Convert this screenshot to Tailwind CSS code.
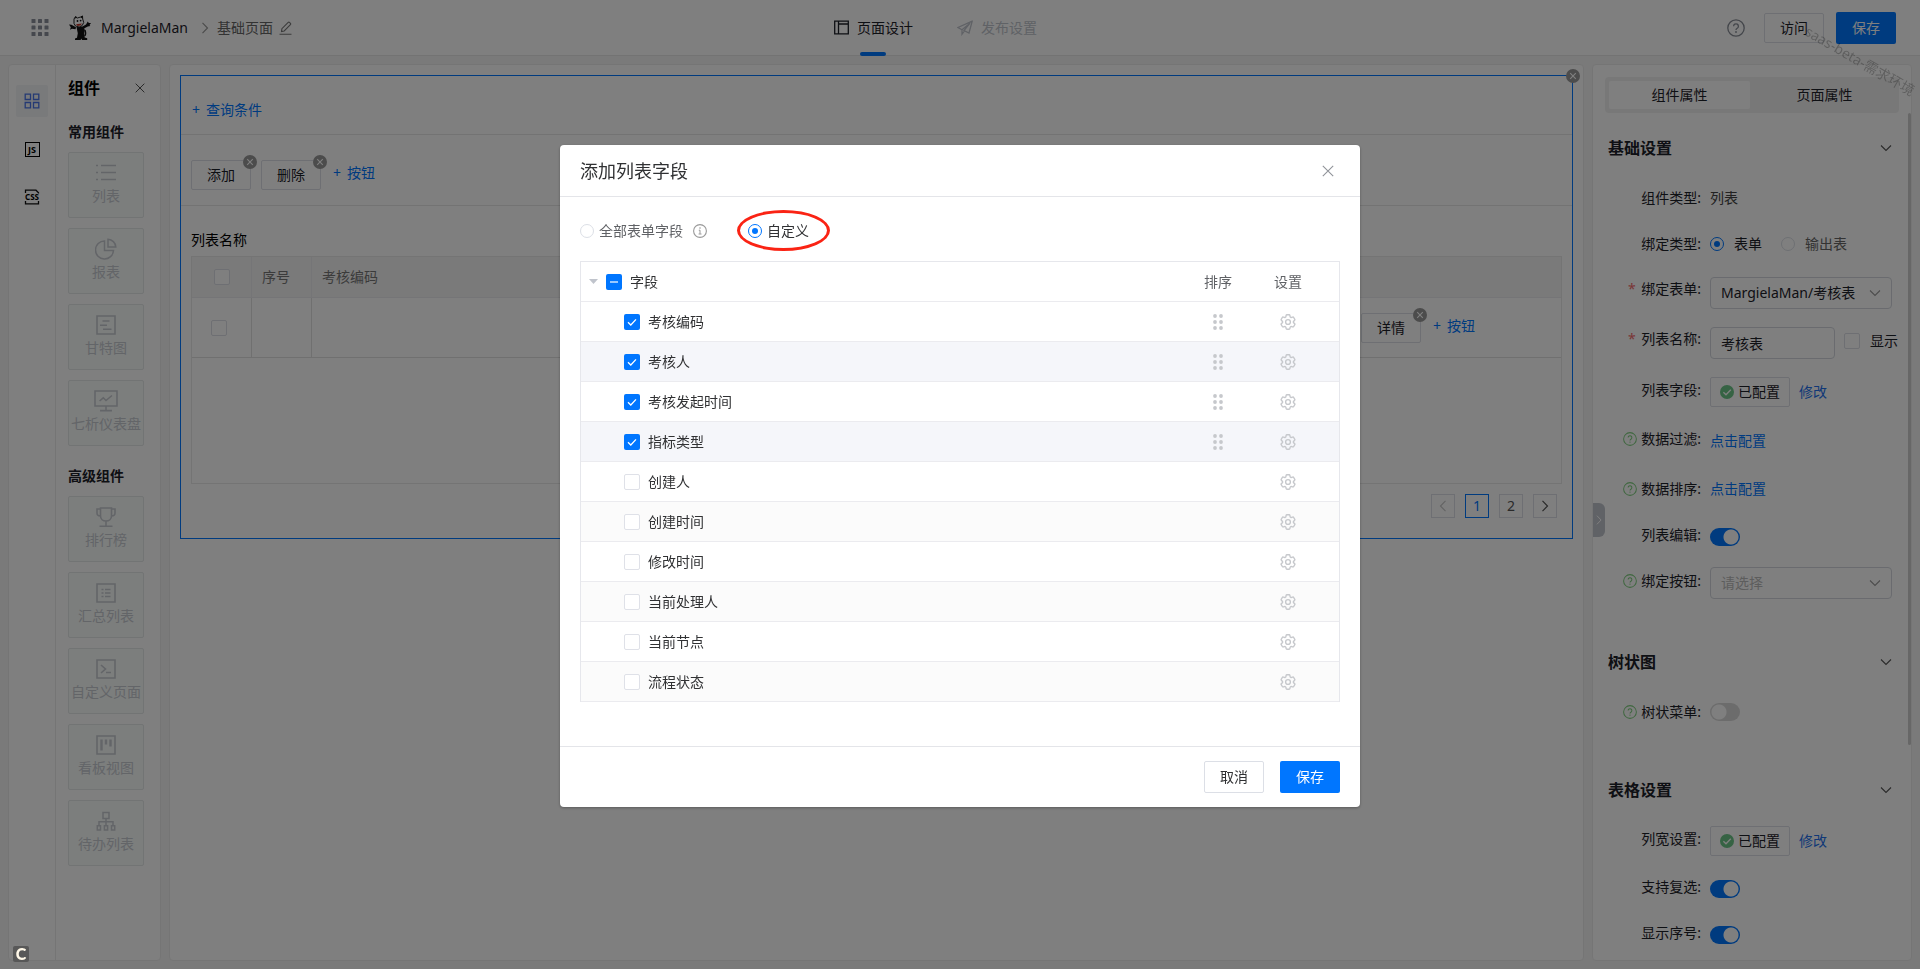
<!DOCTYPE html>
<html lang="zh-CN">
<head>
<meta charset="utf-8">
<title>MargielaMan - 页面设计</title>
<script src="https://cdn.jsdelivr.net/npm/@tailwindcss/browser@4"></script>
</head>
<body class="font-['Noto_Sans','Noto_Sans_CJK_SC',sans-serif] text-sm leading-5 text-[#1d2129]">

<!-- Icon library -->
<svg class="hidden" aria-hidden="true">
  <symbol id="chev-down" viewBox="0 0 12 12"><path d="M1 3.5l5 5 5-5" fill="none" stroke="currentColor" stroke-width="1.1"/></symbol>
  <symbol id="chev-right" viewBox="0 0 12 12"><path d="M3.5 .8l5 5.2-5 5.2" fill="none" stroke="currentColor" stroke-width="1.2"/></symbol>
  <symbol id="close" viewBox="0 0 12 12"><path d="M.8.8l10.4 10.4M11.2.8L.8 11.2" fill="none" stroke="currentColor" stroke-width="1.1"/></symbol>
  <symbol id="badge-x" viewBox="0 0 14 14"><circle cx="7" cy="7" r="7" fill="#999"/><path d="M4.2 4.2l5.6 5.6M9.8 4.2L4.2 9.8" stroke="#fff" stroke-width="1.1"/></symbol>
  <symbol id="help" viewBox="0 0 18 18"><circle cx="9" cy="9" r="8.2" fill="none" stroke="currentColor" stroke-width="1.3"/><path d="M6.600 7.200a2.400 2.400 0 1 1 3.600 2.100c-.8.45-1.200.8-1.200 1.700" fill="none" stroke="currentColor" stroke-width="1.3"/><circle cx="9" cy="13" r=".9" fill="currentColor"/></symbol>
  <symbol id="done" viewBox="0 0 14 14"><circle cx="7" cy="7" r="7" fill="#6cc788"/><path d="M3.4 7.2l2.6 2.6 4.8-5" fill="none" stroke="#fff" stroke-width="1.3"/></symbol>
  <symbol id="tick" viewBox="0 0 16 16"><path d="M4 8.2l2.8 2.8L12 5.4" fill="none" stroke="#fff" stroke-width="1.3"/></symbol>
  <symbol id="drag" viewBox="0 0 10 16"><g fill="#c6c8cc"><circle cx="2" cy="2" r="1.9"/><circle cx="8" cy="2" r="1.9"/><circle cx="2" cy="8" r="1.9"/><circle cx="8" cy="8" r="1.9"/><circle cx="2" cy="14" r="1.9"/><circle cx="8" cy="14" r="1.9"/></g></symbol>
  <symbol id="gear" viewBox="2 2 20 20"><g fill="none" stroke="#c6c8cc" stroke-width="1.7"><path d="M9.594 3.94c.09-.542.56-.94 1.11-.94h2.593c.55 0 1.02.398 1.11.94l.213 1.281c.063.374.313.686.645.87.074.04.147.083.22.127.325.196.72.257 1.075.124l1.217-.456a1.125 1.125 0 0 1 1.37.49l1.296 2.247a1.125 1.125 0 0 1-.26 1.431l-1.003.827c-.293.241-.438.613-.43.992a7.723 7.723 0 0 1 0 .255c-.008.378.137.75.43.991l1.004.827c.424.35.534.955.26 1.43l-1.298 2.247a1.125 1.125 0 0 1-1.369.491l-1.217-.456c-.355-.133-.75-.072-1.076.124a6.47 6.47 0 0 1-.22.128c-.331.183-.581.495-.644.869l-.213 1.281c-.09.543-.56.94-1.11.94h-2.594c-.55 0-1.019-.398-1.11-.94l-.213-1.281c-.062-.374-.312-.686-.644-.87a6.52 6.52 0 0 1-.22-.127c-.325-.196-.72-.257-1.076-.124l-1.217.456a1.125 1.125 0 0 1-1.369-.49l-1.297-2.247a1.125 1.125 0 0 1 .26-1.431l1.004-.827c.292-.24.437-.613.43-.991a6.932 6.932 0 0 1 0-.255c.007-.38-.138-.751-.43-.992l-1.004-.827a1.125 1.125 0 0 1-.26-1.43l1.297-2.247a1.125 1.125 0 0 1 1.37-.491l1.216.456c.356.133.751.072 1.076-.124.072-.044.146-.086.22-.128.332-.183.582-.495.644-.869l.214-1.28Z"/><circle cx="12" cy="12" r="3"/></g></symbol>
</svg>

<div class="flex h-screen flex-col bg-[#f5f5f5]">

  <!-- Top bar -->
  <header class="flex h-14 shrink-0 items-stretch border-b border-[#e6e6e6] bg-white">
    <div class="flex flex-1 items-center pl-[31px]">
      <button aria-label="应用" class="text-[#8c919c]">
        <svg class="size-[18px]" viewBox="0 0 18 18" fill="currentColor"><rect x=".5" y="0" width="4" height="4" rx=".6"/><rect x="7" y="0" width="4" height="4" rx=".6"/><rect x="13.500" y="0" width="4" height="4" rx=".6"/><rect x=".5" y="6.500" width="4" height="4" rx=".6"/><rect x="7" y="6.500" width="4" height="4" rx=".6"/><rect x="13.500" y="6.500" width="4" height="4" rx=".6"/><rect x=".5" y="13" width="4" height="4" rx=".6"/><rect x="7" y="13" width="4" height="4" rx=".6"/><rect x="13.500" y="13" width="4" height="4" rx=".6"/></svg>
      </button>
      <svg class="ml-[19px] h-[26px] w-6" viewBox="0 0 24 26" aria-label="MargielaMan"><path d="M8.500 12l7-.8 1.400 4-.6 3 .4 4.300 2.500.8v1.700H14l-.6-1.500-.8 1.500H7v-1.500l2-.8.800-4.500zM1 9.500l2.500.3 4.500 2.500-.5 2-3.500-.6-2 1 .8-2.400zM14.500 11.500l3.500-2 1.800-3 1 1.500 2.200 0-1.500 2 .8 1-2.500.4-3.800 2z" fill="#111"/><path d="M6 4l1.500-2.500L9.500 3l3-1 2-1 .2 3 1 3.500-1.500 3-3 1.500-3.700-1L6 8.500z" fill="#fff" stroke="#222" stroke-width="1"/><path d="M6.500 3.500l1.200-2L9.200 3zM12.500 2.500l2-2 .2 3z" fill="#111"/><circle cx="9.500" cy="6" r=".9" fill="#111"/><circle cx="12.600" cy="5.600" r=".9" fill="#111"/><path d="M8 9.300l6-.8-1.500 2-3 .4z" fill="#c0392b"/><path d="M16.500 21c2-1.500 1.200-4 .5-6" stroke="#111" stroke-width="1.300" fill="none"/></svg>
      <span class="ml-[9px]">MargielaMan</span>
      <svg class="ml-[11px] size-3 text-[#999]"><use href="#chev-right"/></svg>
      <span class="ml-1.5 text-[#666]">基础页面</span>
      <button aria-label="重命名" class="ml-1.5 text-[#777]"><svg class="size-3.5" viewBox="0 0 14 14" fill="none" stroke="currentColor" stroke-width="1.100"><path d="M.5 13.300h12M2.500 10.500l.4-2.800 6.300-6.300c.4-.4.900-.4 1.300 0l.9.900c.4.400.4.900 0 1.300L5.200 10z"/></svg></button>
    </div>
    <nav class="flex items-stretch gap-11 pr-14">
      <a href="#" class="relative flex items-center gap-2">
        <svg class="size-[15px]" viewBox="0 0 15 15" fill="none" stroke="currentColor" stroke-width="1.300"><path d="M.7 1.200h13.600v12.600H.7zM4.500 1.200v12.600M4.500 4h9.800"/></svg>
        页面设计
        <span class="absolute bottom-[-1px] left-[26px] h-1 w-[26px] rounded-full bg-[#0076ff]"></span>
      </a>
      <a href="#" class="flex items-center gap-2 text-[#c0c4cc]">
        <svg class="size-4" viewBox="0 0 16 16" fill="none" stroke="currentColor" stroke-width="1.300"><path d="M15.200 1.200L1 7.500l4 2.200 8-6.500-6 7.300 5 2.500zM5 9.700v4.500l2.300-3"/></svg>
        发布设置
      </a>
    </nav>
    <div class="flex flex-1 items-center justify-end pr-6">
      <button aria-label="帮助" class="text-[#888d96]"><svg class="size-[18px]"><use href="#help"/></svg></button>
      <button class="ml-[19px] h-[30px] w-[60px] rounded-xs border border-[#dcdfe6] bg-white">访问</button>
      <button class="ml-3 h-8 w-[60px] rounded-xs bg-[#0076ff] text-white">保存</button>
    </div>
  </header>

  <div class="flex min-h-0 flex-1 gap-2 px-2 pt-2 pb-2">

    <!-- Component palette -->
    <aside class="flex w-[153px] shrink-0 rounded border border-[#ebebeb] bg-white">
      <div class="flex w-[47px] shrink-0 flex-col items-center gap-4 border-r border-[#ebebeb] pt-5">
        <button aria-label="组件" class="grid size-8 place-items-center rounded-xs bg-[#f3f4f6] text-[#4a74e8]"><svg class="size-4" viewBox="0 0 16 16" fill="none" stroke="currentColor" stroke-width="1.300"><path d="M1.200 1.200h5.300v5.300H1.200zM9.500 1.200h5.300v5.300H9.500zM1.200 9.500h5.300v5.300H1.200zM9.500 9.500h5.300v5.300H9.500z"/></svg></button>
        <button aria-label="JS" class="grid size-8 place-items-center"><span class="grid size-[15px] place-items-center border border-black text-[9px] leading-none font-bold text-black">JS</span></button>
        <button aria-label="CSS" class="grid size-8 place-items-center"><span class="relative grid size-4 place-items-center text-[8px] leading-none font-bold text-black"><svg class="absolute inset-0 size-4" viewBox="0 0 16 16" fill="none" stroke="#111" stroke-width="1.300"><path d="M1.500 4V1.200H12l2.500 2.500v.8M1.500 12v2.800h13V12"/></svg>CSS</span></button>
      </div>
      <div class="min-w-0 flex-1 pl-3">
        <div class="flex h-[46px] items-center justify-between pr-[15px]">
          <h2 class="text-base font-bold text-black">组件</h2>
          <button aria-label="关闭" class="text-[#444]"><svg class="size-2.5"><use href="#close"/></svg></button>
        </div>
        <h3 class="flex h-[41px] items-center font-bold">常用组件</h3>
        <div class="flex flex-col gap-2.5 text-[#c6cad1]">
          <button class="flex h-[66px] w-[76px] flex-col items-center gap-0.5 rounded-xs border border-[#e4e8e8] bg-[#f9fcfa] pt-[9px] whitespace-nowrap"><svg class="size-[22px]" viewBox="0 0 22 22" stroke="currentColor" stroke-width="1.500"><path d="M1 3.500h2M6 3.500h15M1 10.500h2M6 10.500h15M1 17.500h2M6 17.500h15"/></svg>列表</button>
          <button class="flex h-[66px] w-[76px] flex-col items-center gap-0.5 rounded-xs border border-[#e4e8e8] bg-[#f9fcfa] pt-[9px] whitespace-nowrap"><svg class="size-[22px]" viewBox="0 0 22 22" fill="none" stroke="currentColor" stroke-width="1.500"><path d="M9.500 3a9 9 0 1 0 9 9.500h-9zM13 1.200a8.300 8.300 0 0 1 7.800 7.800H13z"/></svg>报表</button>
          <button class="flex h-[66px] w-[76px] flex-col items-center gap-0.5 rounded-xs border border-[#e4e8e8] bg-[#f9fcfa] pt-[9px] whitespace-nowrap"><svg class="size-[22px]" viewBox="0 0 22 22" fill="none" stroke="currentColor" stroke-width="1.600"><path d="M2 2h18v18H2zM7.500 7h7M5 11.200h7M8 15.300h8.500"/></svg>甘特图</button>
          <button class="flex h-[66px] w-[76px] flex-col items-center gap-0.5 rounded-xs border border-[#e4e8e8] bg-[#f9fcfa] pt-[9px] whitespace-nowrap"><svg class="h-[22px] w-[26px]" viewBox="0 0 26 24" fill="none" stroke="currentColor" stroke-width="1.700"><path d="M1 1h24v16.500H1zM13 17.500v4.500M6.500 22.500h13M6 12l4-3.500 3 3 6.500-5.500"/></svg>七析仪表盘</button>
        </div>
        <h3 class="flex h-[50px] items-center pt-2.5 font-bold">高级组件</h3>
        <div class="flex flex-col gap-2.5 text-[#c6cad1]">
          <button class="flex h-[66px] w-[76px] flex-col items-center gap-0.5 rounded-xs border border-[#e4e8e8] bg-[#f9fcfa] pt-[9px] whitespace-nowrap"><svg class="size-[22px]" viewBox="0 0 22 22" fill="none" stroke="currentColor" stroke-width="1.600"><path d="M5.500 2h11v8c0 3-2.500 5-5.500 5s-5.500-2-5.500-5zM11 15v5M4.500 20.200h13M5.500 3H2v4c0 2 1.500 3 3.500 3M16.500 3H20v4c0 2-1.500 3-3.500 3"/></svg>排行榜</button>
          <button class="flex h-[66px] w-[76px] flex-col items-center gap-0.5 rounded-xs border border-[#e4e8e8] bg-[#f9fcfa] pt-[9px] whitespace-nowrap"><svg class="size-[22px]" viewBox="0 0 22 22" fill="none" stroke="currentColor" stroke-width="1.600"><path d="M2 2h18v18H2zM6.500 7.500h2M10 7.500h5.500M6.500 11h2M10 11h5.500M6.500 14.500h2M10 14.500h5.500"/></svg>汇总列表</button>
          <button class="flex h-[66px] w-[76px] flex-col items-center gap-0.5 rounded-xs border border-[#e4e8e8] bg-[#f9fcfa] pt-[9px] whitespace-nowrap"><svg class="size-[22px]" viewBox="0 0 22 22" fill="none" stroke="currentColor" stroke-width="1.600"><path d="M2 2h18v18H2zM6 7l4.500 4L6 15M11 14.500h5"/></svg>自定义页面</button>
          <button class="flex h-[66px] w-[76px] flex-col items-center gap-0.5 rounded-xs border border-[#e4e8e8] bg-[#f9fcfa] pt-[9px] whitespace-nowrap"><svg class="size-[22px]" viewBox="0 0 22 22" fill="none" stroke="currentColor" stroke-width="1.600"><path d="M2 2h18v18H2z"/><path stroke-width="2.400" d="M6.500 5.500v11M11 5.500v5M15.500 5.500v7"/></svg>看板视图</button>
          <button class="flex h-[66px] w-[76px] flex-col items-center gap-0.5 rounded-xs border border-[#e4e8e8] bg-[#f9fcfa] pt-[9px] whitespace-nowrap"><svg class="size-[22px]" viewBox="0 0 22 22" fill="none" stroke="currentColor" stroke-width="1.500"><path d="M8 2.500h6v6H8zM11 8.500v7M4 15.500v-3.800h14v3.800M2.300 15.800h3.200v4.200H2.300zM9.400 15.800h3.200v4.200H9.400zM16.500 15.800h3.200v4.200h-3.200z"/></svg>待办列表</button>
        </div>
      </div>
    </aside>

    <!-- Canvas -->
    <main class="min-w-0 flex-1 rounded border border-[#ebebeb] bg-white p-2.5">
      <section class="relative border border-[#0076ff]">
        <button aria-label="删除组件" class="absolute -top-[7px] -right-2 size-3.5"><svg class="size-3.5"><use href="#badge-x"/></svg></button>
        <div class="flex h-[59px] items-center border-b border-[#e6e6e6] px-[11px] pt-2.5">
          <button class="flex gap-1.5 text-[#0076ff]"><span>+</span>查询条件</button>
        </div>
        <div class="flex h-[71px] items-center gap-2.5 border-b border-[#e6e6e6] px-2.5 pt-2.5">
          <div class="relative"><button class="h-[30px] w-[60px] rounded-xs border border-[#dcdfe6]">添加</button><button aria-label="移除添加" class="absolute -top-[5px] -right-1.5 size-3.5"><svg class="size-3.5"><use href="#badge-x"/></svg></button></div>
          <div class="relative"><button class="h-[30px] w-[60px] rounded-xs border border-[#dcdfe6]">删除</button><button aria-label="移除删除" class="absolute -top-[5px] -right-1.5 size-3.5"><svg class="size-3.5"><use href="#badge-x"/></svg></button></div>
          <button class="flex gap-1.5 pb-1 pl-0.5 text-[#0076ff]"><span>+</span>按钮</button>
        </div>
        <div class="px-2.5 pb-5">
          <h2 class="flex h-[50px] items-center pt-[18px] text-black">列表名称</h2>
          <div class="h-[228px] border border-[#e8e8e8]">
            <table class="w-full table-fixed border-separate border-spacing-0">
              <thead>
                <tr class="h-[41px] bg-[#f5f5f5] text-left text-[#777]">
                  <th class="w-[60px] border-r border-b border-[#ebebef]"><input type="checkbox" aria-label="全选" class="mx-auto block size-4 appearance-none rounded-xs border border-[#dcdfe6] bg-white"></th>
                  <th class="w-[60px] border-r border-b border-[#ebebef] pl-2.5 font-normal">序号</th>
                  <th class="border-b border-[#ebebef] pl-2.5 font-normal">考核编码</th>
                  <th class="w-[210px] border-b border-[#ebebef]"></th>
                </tr>
              </thead>
              <tbody>
                <tr class="h-[60px]">
                  <td class="border-r border-b border-[#e0e0e0] pl-[19px]"><input type="checkbox" aria-label="选择行" class="block size-4 appearance-none rounded-xs border border-[#dcdfe6] bg-white"></td>
                  <td class="border-r border-b border-[#e0e0e0]"></td>
                  <td class="border-b border-[#e0e0e0]"></td>
                  <td class="border-b border-[#e0e0e0]">
                    <div class="flex items-center gap-2.5 pl-2.5">
                      <div class="relative"><button class="h-[30px] w-[60px] rounded-xs border border-[#dcdfe6]">详情</button><button aria-label="移除详情" class="absolute -top-[5px] -right-1.5 size-3.5"><svg class="size-3.5"><use href="#badge-x"/></svg></button></div>
                      <button class="flex gap-1.5 pb-1 pl-0.5 text-[#0076ff]"><span>+</span>按钮</button>
                    </div>
                  </td>
                </tr>
              </tbody>
            </table>
          </div>
          <nav aria-label="分页" class="mt-2.5 flex justify-end gap-2.5 pr-[5px]">
            <button aria-label="上一页" class="grid size-6 place-items-center border border-[#dcdfe6] text-[#c8c8c8]"><svg class="size-3 rotate-180"><use href="#chev-right"/></svg></button>
            <button class="size-6 border border-[#0076ff] text-[#0076ff]">1</button>
            <button class="size-6 border border-[#dcdfe6] text-[#555]">2</button>
            <button aria-label="下一页" class="grid size-6 place-items-center border border-[#dcdfe6] text-[#555]"><svg class="size-3"><use href="#chev-right"/></svg></button>
          </nav>
        </div>
      </section>
    </main>

    <!-- Property panel -->
    <aside class="relative w-[320px] shrink-0 overflow-hidden rounded border border-[#ebebeb] bg-white pt-3 whitespace-nowrap">
      <div class="absolute top-12 right-0 h-[632px] w-[3px] rounded-full bg-[#cfcfcf]"></div>
      <button aria-label="收起" class="absolute top-[438px] left-0 grid h-[34px] w-3 place-items-center rounded-r-md bg-[#c0c4cc] text-white"><svg class="size-2.5"><use href="#chev-right"/></svg></button>
      <div class="mx-3 flex h-9 gap-1 rounded bg-[#f1f1f1] p-1">
        <button class="flex-1 rounded-xs bg-white">组件属性</button>
        <button class="flex-1">页面属性</button>
      </div>
      <div class="mt-2 pr-[19px] pl-[15px]">
        <div class="flex h-[54px] items-center justify-between"><h2 class="text-base font-bold">基础设置</h2><svg class="size-3 text-[#555]"><use href="#chev-down"/></svg></div>
        <div class="flex h-[46px] items-center gap-[9px]"><span class="w-[93px] text-right">组件类型:</span><span class="text-[#444]">列表</span></div>
        <div class="flex h-[46px] items-center gap-[9px]"><span class="w-[93px] text-right">绑定类型:</span>
          <label class="flex items-center gap-2.5"><input type="radio" name="bind" checked class="size-3.5 appearance-none rounded-full border border-[#0076ff] bg-[#0076ff] bg-clip-content p-[3px]">表单</label>
          <label class="ml-2.5 flex items-center gap-2.5 text-[#666]"><input type="radio" name="bind" class="size-3.5 appearance-none rounded-full border border-[#dcdfe6]">输出表</label>
        </div>
        <div class="flex h-[52px] items-center gap-[9px]"><label for="form" class="w-[93px] pb-2 text-right"><span class="mr-0.5 text-[#f56c6c]">*</span> 绑定表单:</label>
          <div class="relative flex-1"><select id="form" class="h-8 w-full appearance-none rounded border border-[#d4d7de] pl-2.5"><option>MargielaMan/考核表</option></select><svg class="pointer-events-none absolute top-2.5 right-[11px] size-3 text-[#999]"><use href="#chev-down"/></svg></div></div>
        <div class="flex h-12 items-center gap-[9px]"><label for="name" class="w-[93px] shrink-0 pb-2 text-right"><span class="mr-0.5 text-[#f56c6c]">*</span> 列表名称:</label>
          <input id="name" type="text" value="考核表" class="h-8 w-[125px] shrink-0 rounded border border-[#d4d7de] px-2.5">
          <label class="flex shrink-0 items-center gap-2.5 pb-1"><input type="checkbox" class="size-4 appearance-none rounded-xs border border-[#dcdfe6]">显示</label></div>
        <div class="flex h-[50px] items-center gap-[9px]"><span class="w-[93px] pb-1 text-right">列表字段:</span>
          <button class="flex h-[30px] w-20 items-center justify-center gap-1 rounded-xs border border-[#dcdfe6]"><svg class="size-3.5"><use href="#done"/></svg>已配置</button><a href="#" class="text-[#2271ee]">修改</a></div>
        <div class="flex h-12 items-center gap-[9px]"><span class="flex w-[93px] items-center justify-end gap-1 pb-1"><svg class="size-3.5 text-[#7fce7f]"><use href="#help"/></svg>数据过滤:</span><a href="#" class="text-[#0076ff]">点击配置</a></div>
        <div class="flex h-12 items-center gap-[9px]"><span class="flex w-[93px] items-center justify-end gap-1"><svg class="size-3.5 text-[#7fce7f]"><use href="#help"/></svg>数据排序:</span><a href="#" class="text-[#0076ff]">点击配置</a></div>
        <div class="flex h-12 items-center gap-[9px]"><label for="edit" class="w-[93px] pb-1 text-right">列表编辑:</label>
          <input id="edit" type="checkbox" role="switch" checked class="h-[18px] w-[30px] appearance-none rounded-full bg-[#0076ff] bg-[radial-gradient(circle_at_21px_9px,white_7px,transparent_8px)]"></div>
        <div class="flex h-11 items-center gap-[9px]"><label for="btn" class="flex w-[93px] items-center justify-end gap-1 pb-1"><svg class="size-3.5 text-[#7fce7f]"><use href="#help"/></svg>绑定按钮:</label>
          <div class="relative flex-1"><select id="btn" class="h-8 w-full appearance-none rounded border border-[#d4d7de] pl-2.5 text-[#bbb]"><option>请选择</option></select><svg class="pointer-events-none absolute top-2.5 right-[11px] size-3 text-[#999]"><use href="#chev-down"/></svg></div></div>

        <div class="mt-[30px] flex h-[54px] items-center justify-between"><h2 class="text-base font-bold">树状图</h2><svg class="size-3 text-[#555]"><use href="#chev-down"/></svg></div>
        <div class="flex h-[46px] items-center gap-[9px]"><label for="tree" class="flex w-[93px] items-center justify-end gap-1"><svg class="size-3.5 text-[#7fce7f]"><use href="#help"/></svg>树状菜单:</label>
          <input id="tree" type="checkbox" role="switch" class="h-[18px] w-[30px] appearance-none rounded-full bg-[#d9d9d9] bg-[radial-gradient(circle_at_9px_9px,white_7px,transparent_8px)]"></div>

        <div class="mt-7 flex h-[54px] items-center justify-between"><h2 class="text-base font-bold">表格设置</h2><svg class="size-3 text-[#555]"><use href="#chev-down"/></svg></div>
        <div class="flex h-12 items-center gap-[9px]"><span class="w-[93px] pb-1 text-right">列宽设置:</span>
          <button class="flex h-[30px] w-20 items-center justify-center gap-1 rounded-xs border border-[#dcdfe6]"><svg class="size-3.5"><use href="#done"/></svg>已配置</button><a href="#" class="text-[#2271ee]">修改</a></div>
        <div class="flex h-12 items-center gap-[9px]"><label for="multi" class="w-[93px] pb-1 text-right">支持复选:</label>
          <input id="multi" type="checkbox" role="switch" checked class="h-[18px] w-[30px] appearance-none rounded-full bg-[#0076ff] bg-[radial-gradient(circle_at_21px_9px,white_7px,transparent_8px)]"></div>
        <div class="flex h-11 items-center gap-[9px]"><label for="index" class="w-[93px] pb-1 text-right">显示序号:</label>
          <input id="index" type="checkbox" role="switch" checked class="h-[18px] w-[30px] appearance-none rounded-full bg-[#0076ff] bg-[radial-gradient(circle_at_21px_9px,white_7px,transparent_8px)]"></div>
      </div>
    </aside>
  </div>
</div>

<!-- Environment watermark -->
<div class="pointer-events-none fixed top-[50px] -right-0.5 w-32 rotate-30 text-right whitespace-nowrap text-black/25">saas-beta-需求环境</div>

<!-- Modal -->
<div class="fixed inset-0 flex items-start justify-center bg-black/50 pt-[145px]">
  <section role="dialog" aria-label="添加列表字段" class="w-[800px] rounded bg-white shadow-[0_1px_3px_rgba(0,0,0,0.3)]">
    <header class="flex h-[52px] items-center justify-between border-b border-[#e4e5e9] pr-[26px] pl-5">
      <h1 class="text-lg text-[#303133]">添加列表字段</h1>
      <button aria-label="关闭" class="text-[#909399]"><svg class="size-3"><use href="#close"/></svg></button>
    </header>
    <div class="px-5 pb-11">
      <div class="flex h-16 items-center pt-1 text-[#606266]">
        <label class="flex items-center gap-[5px]"><input type="radio" name="scope" class="size-3.5 appearance-none rounded-full border border-[#dcdfe6]">全部表单字段</label>
        <svg class="ml-2.5 size-3.5 text-[#999]" viewBox="0 0 14 14"><circle cx="7" cy="7" r="6.400" fill="none" stroke="currentColor" stroke-width="1.100"/><path d="M5.800 6.200H7v3.600M5.600 10h2.900" fill="none" stroke="currentColor" stroke-width="1"/><circle cx="7" cy="4" r=".8" fill="currentColor"/></svg>
        <div class="relative ml-[41px]">
          <label class="flex items-center gap-[5px] text-[#303133]"><input type="radio" name="scope" checked class="size-3.5 appearance-none rounded-full border border-[#0076ff] bg-[#0076ff] bg-clip-content p-[3px]">自定义</label>
          <span class="pointer-events-none absolute -top-[11px] -left-[11px] h-[41px] w-[93px] rounded-[50%] border-3 border-[#fa2314]"></span>
        </div>
      </div>
      <div class="border-t border-r border-l border-[#e6e7ec]">
        <table class="w-full table-fixed border-separate border-spacing-0">
          <thead>
            <tr class="h-10 text-[#606266]">
              <th class="border-b border-[#ebebef] pl-2 text-left font-normal text-[#303133]">
                <label class="flex items-center gap-2"><svg class="size-[9px]" viewBox="0 0 9 9"><path d="M0 2h9L4.500 7z" fill="#c0c4cc"/></svg>
                <span class="grid size-4"><input type="checkbox" checked class="col-start-1 row-start-1 size-4 appearance-none rounded-xs bg-[#0076ff]"><span class="col-start-1 row-start-1 h-[2px] w-2 place-self-center bg-white/60"></span></span>字段</label></th>
              <th class="w-[70px] border-b border-[#ebebef] text-center font-normal">排序</th>
              <th class="w-[86px] border-b border-[#ebebef] pr-4 text-center font-normal">设置</th>
            </tr>
          </thead>
          <tbody class="text-[#303133]">
            <tr class="h-10"><td class="border-b border-[#ebebef] pl-[43px]"><label class="flex items-center gap-2"><span class="grid size-4"><input type="checkbox" checked class="col-start-1 row-start-1 size-4 appearance-none rounded-xs bg-[#0076ff]"><svg class="col-start-1 row-start-1 size-4"><use href="#tick"/></svg></span>考核编码</label></td><td class="border-b border-[#ebebef]"><svg class="mx-auto h-4 w-2.5"><use href="#drag"/></svg></td><td class="border-b border-[#ebebef] pr-4"><button aria-label="设置考核编码" class="mx-auto block size-4"><svg class="size-4"><use href="#gear"/></svg></button></td></tr>
            <tr class="h-10 bg-[#f5f6fa]"><td class="border-b border-[#ebebef] pl-[43px]"><label class="flex items-center gap-2"><span class="grid size-4"><input type="checkbox" checked class="col-start-1 row-start-1 size-4 appearance-none rounded-xs bg-[#0076ff]"><svg class="col-start-1 row-start-1 size-4"><use href="#tick"/></svg></span>考核人</label></td><td class="border-b border-[#ebebef]"><svg class="mx-auto h-4 w-2.5"><use href="#drag"/></svg></td><td class="border-b border-[#ebebef] pr-4"><button aria-label="设置考核人" class="mx-auto block size-4"><svg class="size-4"><use href="#gear"/></svg></button></td></tr>
            <tr class="h-10"><td class="border-b border-[#ebebef] pl-[43px]"><label class="flex items-center gap-2"><span class="grid size-4"><input type="checkbox" checked class="col-start-1 row-start-1 size-4 appearance-none rounded-xs bg-[#0076ff]"><svg class="col-start-1 row-start-1 size-4"><use href="#tick"/></svg></span>考核发起时间</label></td><td class="border-b border-[#ebebef]"><svg class="mx-auto h-4 w-2.5"><use href="#drag"/></svg></td><td class="border-b border-[#ebebef] pr-4"><button aria-label="设置考核发起时间" class="mx-auto block size-4"><svg class="size-4"><use href="#gear"/></svg></button></td></tr>
            <tr class="h-10 bg-[#f5f6fa]"><td class="border-b border-[#ebebef] pl-[43px]"><label class="flex items-center gap-2"><span class="grid size-4"><input type="checkbox" checked class="col-start-1 row-start-1 size-4 appearance-none rounded-xs bg-[#0076ff]"><svg class="col-start-1 row-start-1 size-4"><use href="#tick"/></svg></span>指标类型</label></td><td class="border-b border-[#ebebef]"><svg class="mx-auto h-4 w-2.5"><use href="#drag"/></svg></td><td class="border-b border-[#ebebef] pr-4"><button aria-label="设置指标类型" class="mx-auto block size-4"><svg class="size-4"><use href="#gear"/></svg></button></td></tr>
            <tr class="h-10"><td class="border-b border-[#ebebef] pl-[43px]"><label class="flex items-center gap-2"><input type="checkbox" class="size-4 appearance-none rounded-xs border border-[#dfe1e8] bg-white">创建人</label></td><td class="border-b border-[#ebebef]"></td><td class="border-b border-[#ebebef] pr-4"><button aria-label="设置创建人" class="mx-auto block size-4"><svg class="size-4"><use href="#gear"/></svg></button></td></tr>
            <tr class="h-10 bg-[#fbfbfb]"><td class="border-b border-[#ebebef] pl-[43px]"><label class="flex items-center gap-2"><input type="checkbox" class="size-4 appearance-none rounded-xs border border-[#dfe1e8] bg-white">创建时间</label></td><td class="border-b border-[#ebebef]"></td><td class="border-b border-[#ebebef] pr-4"><button aria-label="设置创建时间" class="mx-auto block size-4"><svg class="size-4"><use href="#gear"/></svg></button></td></tr>
            <tr class="h-10"><td class="border-b border-[#ebebef] pl-[43px]"><label class="flex items-center gap-2"><input type="checkbox" class="size-4 appearance-none rounded-xs border border-[#dfe1e8] bg-white">修改时间</label></td><td class="border-b border-[#ebebef]"></td><td class="border-b border-[#ebebef] pr-4"><button aria-label="设置修改时间" class="mx-auto block size-4"><svg class="size-4"><use href="#gear"/></svg></button></td></tr>
            <tr class="h-10 bg-[#fbfbfb]"><td class="border-b border-[#ebebef] pl-[43px]"><label class="flex items-center gap-2"><input type="checkbox" class="size-4 appearance-none rounded-xs border border-[#dfe1e8] bg-white">当前处理人</label></td><td class="border-b border-[#ebebef]"></td><td class="border-b border-[#ebebef] pr-4"><button aria-label="设置当前处理人" class="mx-auto block size-4"><svg class="size-4"><use href="#gear"/></svg></button></td></tr>
            <tr class="h-10"><td class="border-b border-[#ebebef] pl-[43px]"><label class="flex items-center gap-2"><input type="checkbox" class="size-4 appearance-none rounded-xs border border-[#dfe1e8] bg-white">当前节点</label></td><td class="border-b border-[#ebebef]"></td><td class="border-b border-[#ebebef] pr-4"><button aria-label="设置当前节点" class="mx-auto block size-4"><svg class="size-4"><use href="#gear"/></svg></button></td></tr>
            <tr class="h-10 bg-[#fbfbfb]"><td class="border-b border-[#ebebef] pl-[43px]"><label class="flex items-center gap-2"><input type="checkbox" class="size-4 appearance-none rounded-xs border border-[#dfe1e8] bg-white">流程状态</label></td><td class="border-b border-[#ebebef]"></td><td class="border-b border-[#ebebef] pr-4"><button aria-label="设置流程状态" class="mx-auto block size-4"><svg class="size-4"><use href="#gear"/></svg></button></td></tr>
          </tbody>
        </table>
      </div>
    </div>
    <footer class="flex h-[61px] items-center justify-end gap-4 border-t border-[#e4e5e9] px-5">
      <button class="h-8 w-[60px] rounded-xs border border-[#dcdfe6] text-[#303133]">取消</button>
      <button class="h-8 w-[60px] rounded-xs bg-[#0076ff] text-white">保存</button>
    </footer>
  </section>
</div>

<div class="fixed bottom-[7px] left-[13px] grid size-4 place-items-center rounded-xs bg-[#585858] font-[Lato,sans-serif] text-base leading-none font-black text-[#fff8e8]">C</div>
</body>
</html>
